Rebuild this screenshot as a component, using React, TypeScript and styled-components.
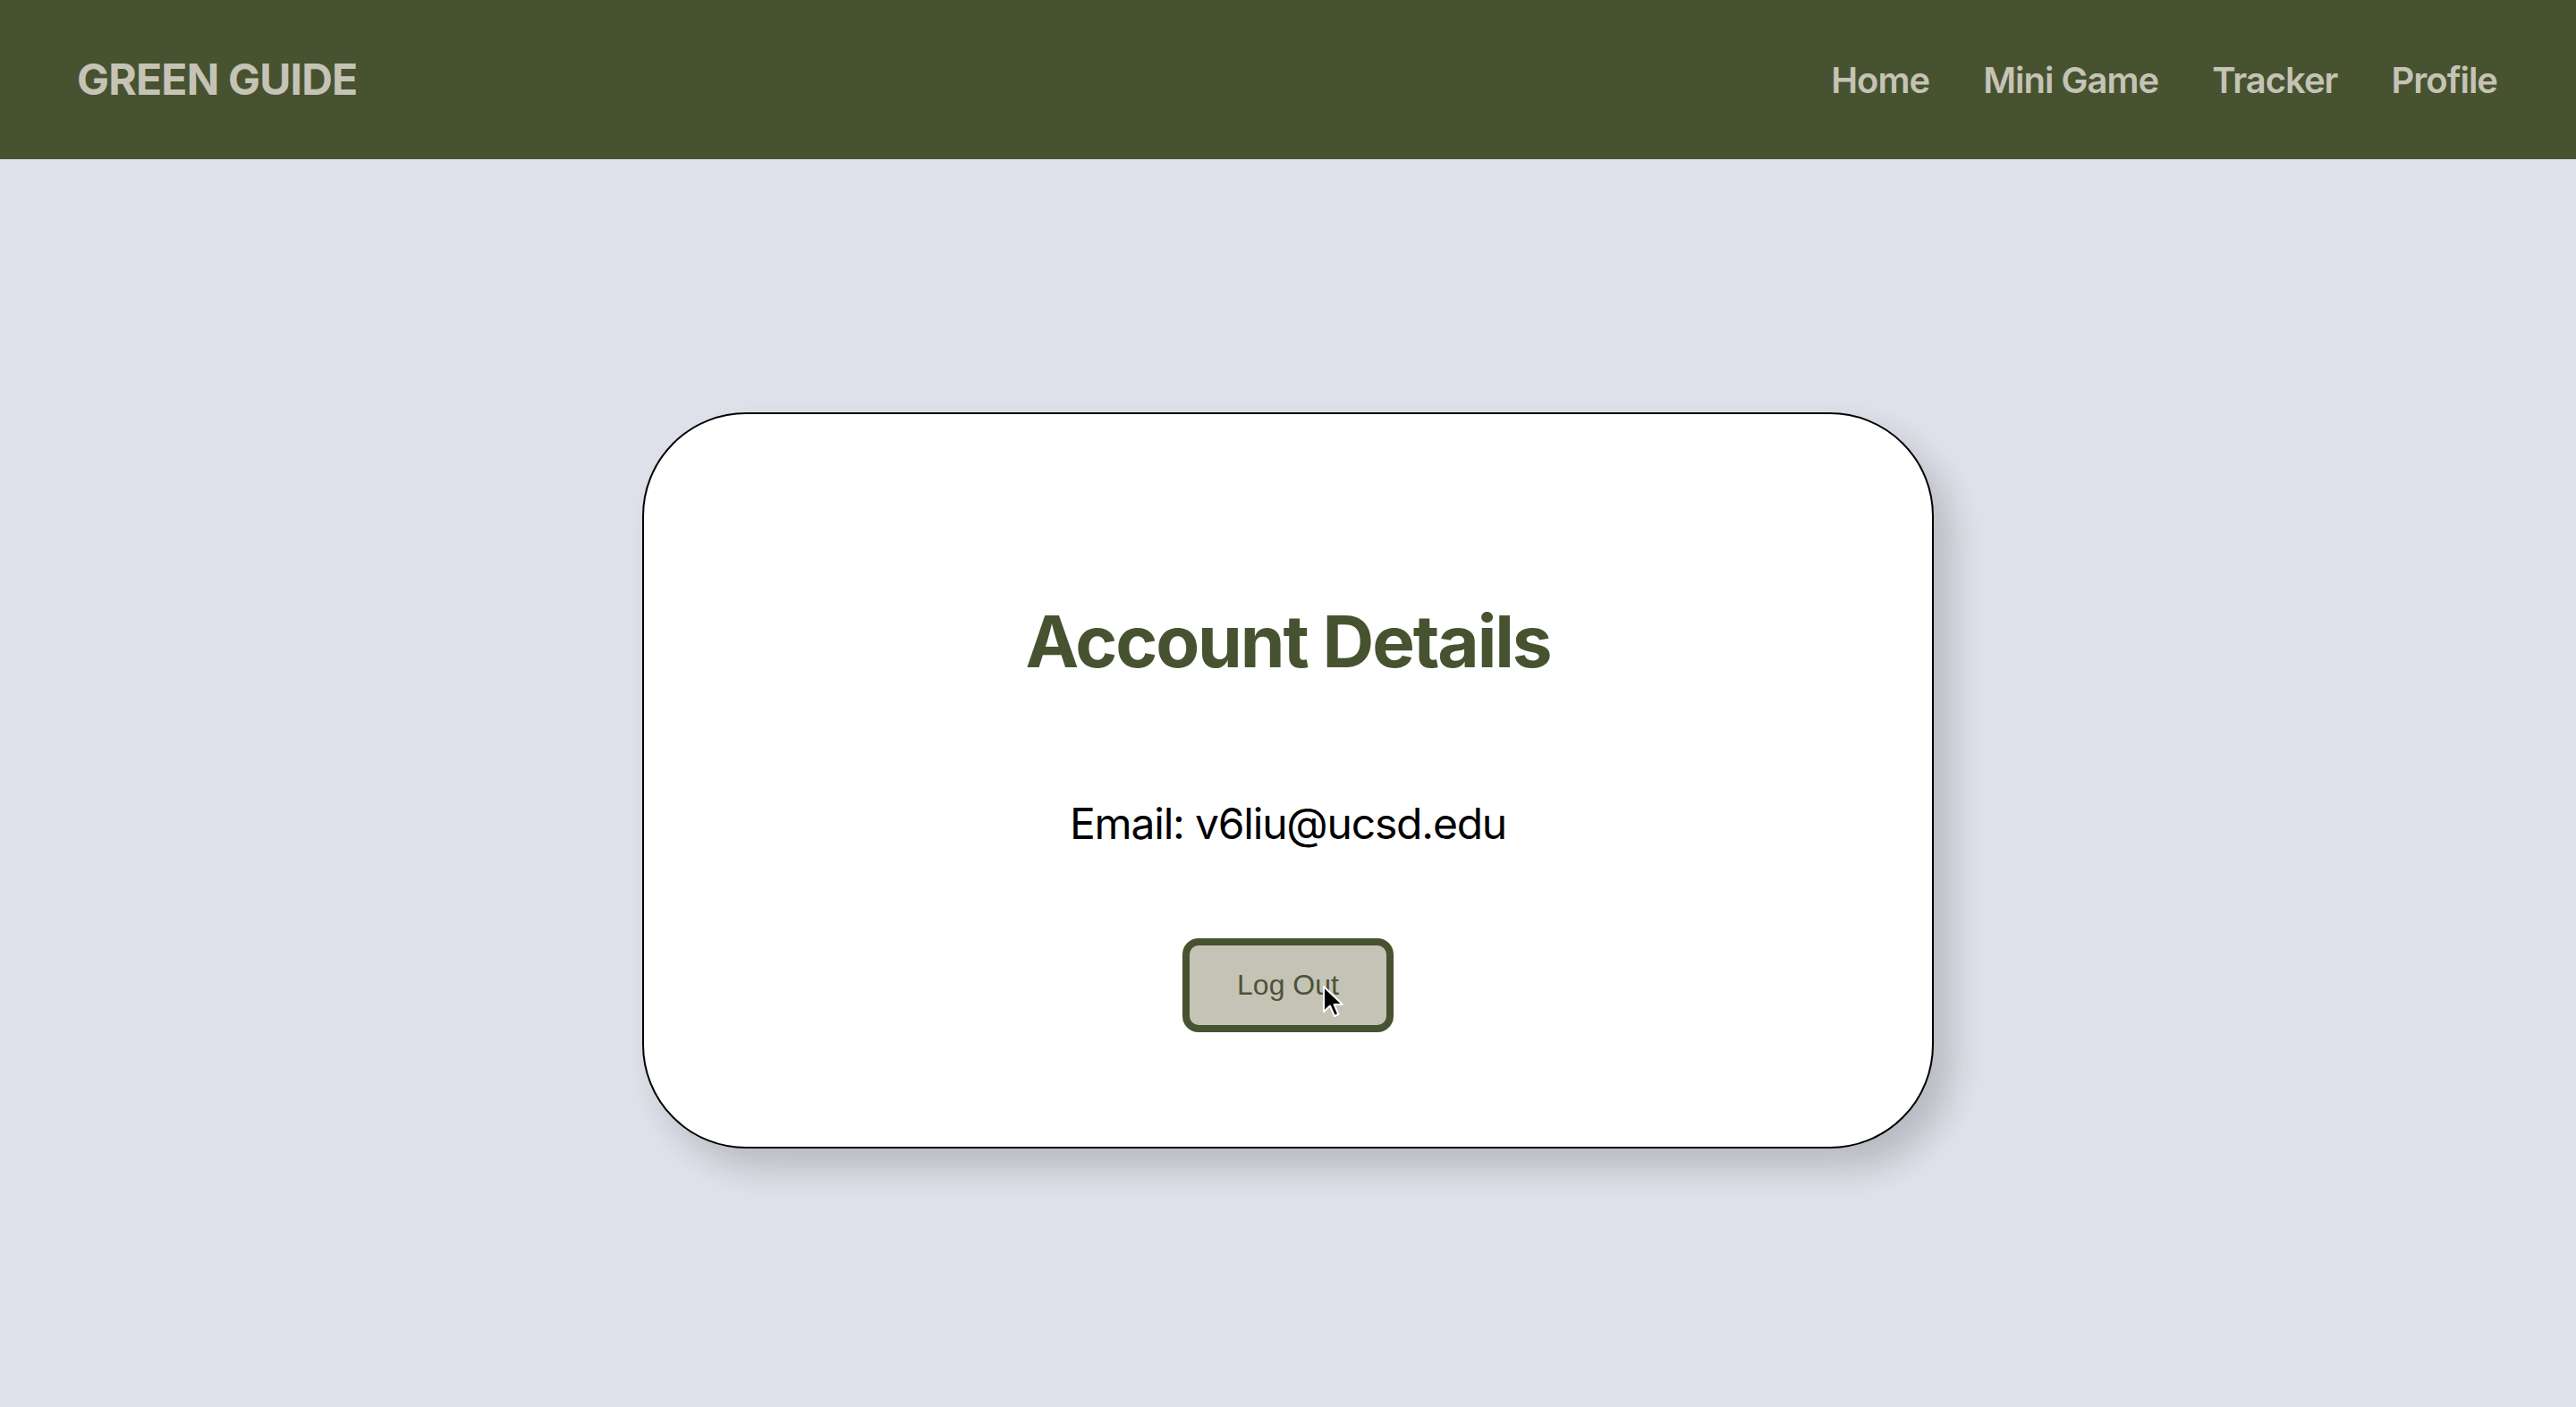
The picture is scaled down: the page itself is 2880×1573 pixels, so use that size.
import React from "react";
import styled, { createGlobalStyle } from "styled-components";

const GlobalStyle = createGlobalStyle`
  html, body {
    margin: 0;
    padding: 0;
    background: #dfe2ea;
    font-family: Inter, "Noto Sans", sans-serif;
  }
  * { box-sizing: border-box; }
`;

const Page = styled.div`
  min-height: 1573px;
  display: flex;
  flex-direction: column;
  background: #dfe2ea;
`;

const NavBar = styled.header`
  height: 178px;
  background: #475330;
  display: flex;
  align-items: center;
  justify-content: space-between;
  padding: 0 88px 0 86px;
`;

const Logo = styled.div`
  font-family: Inter, sans-serif;
  font-weight: 700;
  font-size: 48px;
  color: #c5c3b6;
  letter-spacing: -0.8px;
  margin-top: -2px;
`;

const NavLinks = styled.nav`
  display: flex;
  gap: 60px;
`;

const NavLink = styled.a`
  font-family: Inter, sans-serif;
  font-weight: 600;
  font-size: 40px;
  color: #c5c3b6;
  text-decoration: none;
  letter-spacing: -1px;
`;

const Main = styled.main`
  flex: 1;
  display: flex;
  justify-content: center;
  align-items: flex-start;
  padding-top: 283px;
`;

const Card = styled.section`
  width: 1444px;
  background: #ffffff;
  border: 2px solid #000;
  border-radius: 116px;
  box-shadow: 20px 22px 40px rgba(0, 0, 0, 0.18);
  display: flex;
  flex-direction: column;
  align-items: center;
  padding: 205px 0 128px;
`;

const Title = styled.h1`
  margin: 0;
  font-family: Inter, sans-serif;
  font-weight: 700;
  font-size: 80px;
  line-height: normal;
  color: #475330;
  letter-spacing: -2.1px;
`;

const Email = styled.p`
  margin: 126px 0 0;
  font-family: Inter, sans-serif;
  font-weight: 400;
  font-size: 48px;
  line-height: normal;
  color: #000;
  letter-spacing: -1.2px;
`;

const ButtonWrap = styled.div`
  position: relative;
  margin-top: 99px;
`;

const LogOutButton = styled.button`
  width: 236px;
  height: 105px;
  background: #c5c3b6;
  border: 8px solid #475330;
  border-radius: 18px;
  font-family: "Liberation Sans", Arial, sans-serif;
  font-size: 32px;
  color: #4b5436;
  cursor: pointer;
  padding: 0;
`;

const Cursor = styled.svg`
  position: absolute;
  left: 156px;
  top: 52px;
  width: 26px;
  height: 38px;
  pointer-events: none;
`;

export default function App() {
  return (
    <>
      <GlobalStyle />
      <Page>
        <NavBar>
          <Logo>GREEN GUIDE</Logo>
          <NavLinks>
            <NavLink href="#">Home</NavLink>
            <NavLink href="#">Mini Game</NavLink>
            <NavLink href="#">Tracker</NavLink>
            <NavLink href="#">Profile</NavLink>
          </NavLinks>
        </NavBar>
        <Main>
          <Card>
            <Title>Account Details</Title>
            <Email>Email: v6liu@ucsd.edu</Email>
            <ButtonWrap>
              <LogOutButton>Log Out</LogOutButton>
              <Cursor viewBox="0 0 13 19">
                <path
                  d="M1 1 L1 15 L4.5 11.8 L7 17.5 L9.2 16.5 L6.8 11 L11.5 11 Z"
                  fill="#000"
                  stroke="#fff"
                  strokeWidth="1"
                  strokeLinejoin="round"
                />
              </Cursor>
            </ButtonWrap>
          </Card>
        </Main>
      </Page>
    </>
  );
}
